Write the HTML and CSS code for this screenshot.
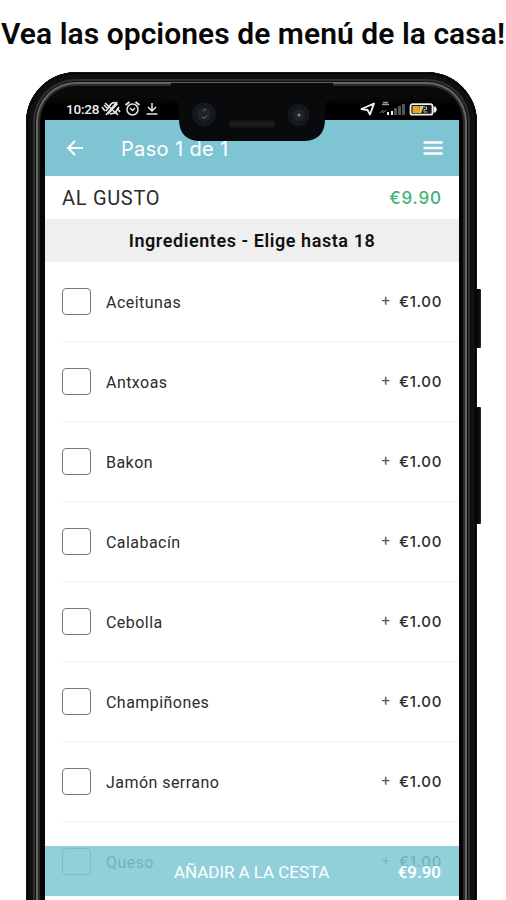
FILE: index.html
```html
<!DOCTYPE html>
<html lang="es">
<head>
<meta charset="utf-8">
<title>Menú</title>
<link rel="stylesheet" href="styles.css">
</head>
<body>
<h1 class="headline"><span>Vea las opciones de menú de la casa!</span></h1>
<main class="phone">
  <div class="frame"></div>
  <i class="side-button power"></i>
  <i class="side-button volume"></i>
  <div class="notch">
    <svg width="146" height="62" viewBox="0 0 146 62">
      <defs><linearGradient id="ear" x2="0" y2="1"><stop stop-color="#0d0d0e"/><stop offset=".6" stop-color="#202021"/><stop offset="1" stop-color="#0d0d0e"/></linearGradient></defs>
      <path d="M-8 20Q0 20 0 29v11q0 21 20 22h106q20-1 20-22V29q0-9 8-9V4H-8Z" fill="#090a0b"/>
      <circle cx="25" cy="35.500" r="12" fill="#15181c"/><circle cx="25" cy="35.500" r="7" fill="#20242a"/>
      <path d="m24 32 3-2m-4 8 3 1 2-3" stroke="#646a72" fill="none"/>
      <circle cx="119.500" cy="36" r="11" fill="#15181c"/><circle cx="120" cy="36" r="6" fill="#20252c"/><circle cx="120" cy="36" r="1.500" fill="#818890"/>
      <rect x="50" y="40" width="46" height="9" rx="4" fill="url(#ear)"/>
    </svg>
  </div>
  <section class="screen">
    <div class="status">
      <span class="clock">10:28</span>
      <svg class="status-left" width="64" height="18" viewBox="0 0 64 18" fill="none" stroke="#e4e4e4" stroke-width="1.500">
        <path d="M5 11 10 4q3-3 6 0l-9 10M9 14l5-1 4-6M4 3l13 12M1 7l3 4m-1-6 3 3m10 0 3 4m-5-1 2 3M16 2 5 15" stroke-width="1.700"/>
        <circle cx="31.500" cy="9.500" r="5.500"/><path d="m24.500 5 4-3m6 0 4 3" stroke-width="2"/><path d="m29 8 2.500 2.500L34 8"/>
        <path d="M51 3v8m-4-4 4 4 4-4M45.500 14h11"/>
      </svg>
      <svg class="status-right" width="78" height="18" viewBox="0 0 78 18">
        <path d="M1.500 9 14 3.500 10 14.500 7.500 10Z" fill="none" stroke="#eee" stroke-width="1.900" stroke-linejoin="round"/>
        <path d="M22 4.500h7M23 2.500h5" stroke="#999" stroke-width="1.500"/>
        <path d="m20 13 3-3v3l3-3" fill="none" stroke="#666"/>
        <path d="M27 12h2v3h-2zM31 11h2v4h-2z" fill="#eee"/><path d="M34 8h3v7h-3zM38 6h3v9h-3zM42 4h3v11h-3z" fill="#555"/>
        <rect x="50.500" y="4.200" width="22" height="10.500" rx="2" fill="#171717" stroke="#eee" stroke-width="1.800"/>
        <path d="M52.500 6h7v7h-7z" fill="#e7a42d"/><path d="M60 6h4l-3 7h-2z" fill="#edc470"/><path d="M64 7h2.500v2.500H64V12h3" fill="none" stroke="#c4b49b"/><path d="M73.500 6.500h2l1.500 3-1.500 3h-2z" fill="#eee"/>
      </svg>
    </div>
    <header class="bar">
      <svg width="18" height="16" viewBox="0 0 18 16" fill="none" stroke="#fff" stroke-width="2"><path d="M17 8H2M9 1 2 8l7 7"/></svg>
      <span class="step">Paso 1 de 1</span>
      <svg width="20" height="14" viewBox="0 0 20 14" stroke="#fff" stroke-width="2.400"><path d="M.5 1.500h19M.5 7h19M.5 12.500h19"/></svg>
    </header>
    <div class="product"><span class="product-name">AL GUSTO</span><span class="product-price">€9.90</span></div>
    <h2 class="group"><span>Ingredientes - Elige hasta 18</span></h2>
    <ul class="options">
      <li><i class="box"></i><span class="name">Aceitunas</span><span class="plus">+</span><span class="price">€1.00</span></li>
      <li><i class="box"></i><span class="name">Antxoas</span><span class="plus">+</span><span class="price">€1.00</span></li>
      <li><i class="box"></i><span class="name">Bakon</span><span class="plus">+</span><span class="price">€1.00</span></li>
      <li><i class="box"></i><span class="name">Calabacín</span><span class="plus">+</span><span class="price">€1.00</span></li>
      <li><i class="box"></i><span class="name">Cebolla</span><span class="plus">+</span><span class="price">€1.00</span></li>
      <li><i class="box"></i><span class="name">Champiñones</span><span class="plus">+</span><span class="price">€1.00</span></li>
      <li><i class="box"></i><span class="name">Jamón serrano</span><span class="plus">+</span><span class="price">€1.00</span></li>
      <li><i class="box"></i><span class="name">Queso</span><span class="plus">+</span><span class="price">€1.00</span></li>
    </ul>
    <footer class="cart"><span class="cart-label">AÑADIR A LA CESTA</span><span class="cart-price">€9.90</span></footer>
  </section>
</main>
</body>
</html>
```
FILE: styles.css
```css
* { box-sizing: border-box; }
body {
  margin: 0;
  height: 900px;
  overflow: hidden;
  background: #fff;
  color: #2c2c2c;
  font-family: Roboto, "Liberation Sans", sans-serif;
  white-space: nowrap;
}
.headline {
  display: flex;
  justify-content: center;
  height: 72px;
  margin: 0;
  padding-top: 15px;
  color: #080808;
  font-size: 30px;
  font-weight: 600;
  letter-spacing: .05px;
  line-height: 38px;
}
.phone {
  position: relative;
  width: 451px;
  height: 828px;
  margin-left: 26px;
  padding: 24px 18px 0 19px;
}
.frame {
  position: absolute;
  inset: 0;
  overflow: hidden;
  border-radius: 50px 50px 0 0;
}
.frame::before {
  content: "";
  position: absolute;
  inset: 0 0 -20px;
  border-radius: 50px 50px 0 0;
  background: #060606;
  box-shadow: inset 0 0 0 1px #171717, inset 0 0 0 2px #000, inset 0 0 0 7px #101010, inset 0 0 0 9px #303030, inset 0 0 0 10px #111, inset 0 0 0 12px #656565, inset 0 0 0 14px #292929, inset 0 0 0 19px #050505;
}
.frame::after {
  content: "";
  position: absolute;
  inset: 14px 15px auto;
  height: 82px;
  border-radius: 36px 36px 0 0;
  background: linear-gradient(#0a0a0b 10px, #000 20px);
}
.side-button {
  position: absolute;
  left: 450px;
  width: 5px;
  border-radius: 0 1px 1px 0;
  background: linear-gradient(90deg, #090909 60%, #303030);
}
.power { top: 217px; height: 59px; }
.volume { top: 335px; height: 117px; }
.notch { position: absolute; z-index: 3; left: 153px; top: 7px; height: 62px; }
.notch svg { display: block; overflow: visible; }
.screen { position: relative; height: 804px; overflow: hidden; background: linear-gradient(transparent 24px, #fff 24px); }
.status { display: flex; height: 24px; padding: 4px 21px 0 21px; color: #eee; }
.clock { width: 35px; font-size: 13.500px; font-weight: 500; letter-spacing: -.2px; line-height: 19px; }
.status-right { margin-left: auto; }
.bar { display: flex; align-items: center; height: 56px; padding: 0 16px 0 21px; background: #7fc4d2; color: #fff; }
.step { flex: 1; padding: 1px 0 0 37px; font-family: Inter, sans-serif; font-size: 20px; font-weight: 400; letter-spacing: .35px; }
.product { display: flex; justify-content: space-between; align-items: center; height: 43px; padding: 1px 17px 0 17px; background: #fff; }
.product-name { font-size: 20px; font-weight: 400; letter-spacing: .7px; }
.product-price { padding-bottom: 1px; color: #3cb574; font-family: Inter, sans-serif; font-size: 17px; font-weight: 500; letter-spacing: .9px; }
.group { display: flex; justify-content: center; height: 43px; margin: 0; background: #efefef; color: #111; font-size: 18px; font-weight: 600; letter-spacing: .57px; line-height: 44px; }
.options { height: 634px; margin: 0; padding: 0; overflow: hidden; background: #fff; list-style: none; }
.options li { display: flex; align-items: center; height: 80px; margin-left: 17px; padding-right: 17px; border-bottom: 1px solid #f1f1f1; }
.box { width: 29px; height: 27px; margin: 0 15px 1px 0; border: 1.500px solid #777; border-radius: 4px; }
.name { flex: 1; padding-top: 1px; font-size: 16px; letter-spacing: .45px; }
.plus { margin: 0 9px 2px 0; color: #555; font-size: 15px; }
.price { padding-bottom: 1px; font-family: Inter, sans-serif; font-size: 15px; font-weight: 500; letter-spacing: .65px; }
.cart {
  position: absolute;
  inset: 750px 0 auto;
  display: flex;
  align-items: center;
  height: 50px;
  padding: 2px 18px 0 129px;
  background: rgba(127, 199, 213, .86);
  color: #fff;
}
.cart::after { content: ""; position: absolute; inset: 50px 0 auto; height: 4px; background: #fff; }
.cart-label { flex: 1; font-size: 17px; letter-spacing: -.05px; }
.cart-price { font-size: 17px; font-weight: 500; }
```
